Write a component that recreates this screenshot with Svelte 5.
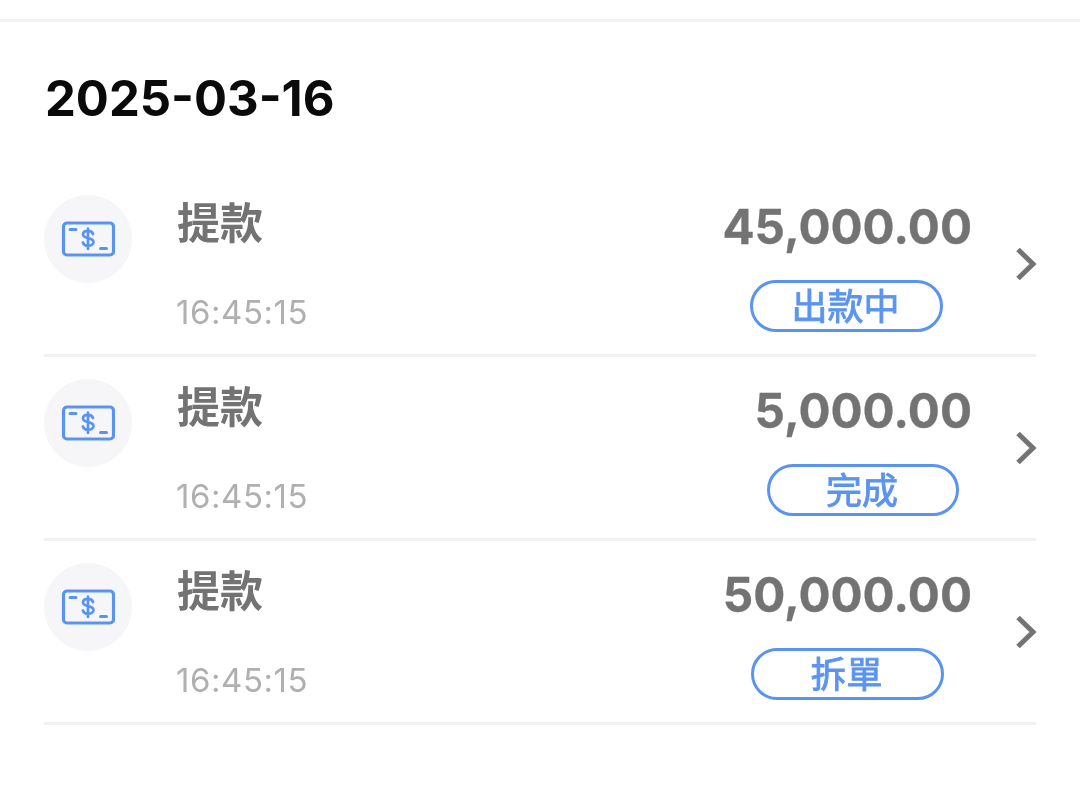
<script>
    const rows = [
        { amount: '45,000.00', status: '出款中', width: 193, right: 93 },
        { amount: '5,000.00', status: '完成', width: 192, right: 77 },
        { amount: '50,000.00', status: '拆單', width: 193, right: 92 }
    ];
</script>

<div class="page">
    <div class="top-line"></div>
    <h2>2025-03-16</h2>

    <div class="list">
        {#each rows as row}
            <div class="row">
                <div class="icon">
                    <svg width="54" height="36" viewBox="0 0 54 36" fill="none" stroke="#5b94f0" stroke-linecap="round" stroke-linejoin="round">
                        <rect x="2.5" y="2" width="50" height="32" rx="3.5" stroke-width="3.2" />
                        <path d="M9 8.5h6M39.5 27.500h6" stroke-width="3" />
                        <path d="M32 13c-.6-2-2.500-3.200-5-3.200-3 0-5 1.500-5 3.700 0 4.800 10.500 2.500 10.500 7.500 0 2.200-2.200 3.700-5.300 3.700-2.700 0-4.700-1.200-5.300-3.200M27 7.500v20.500" stroke-width="2.7" />
                    </svg>
                </div>
                <div class="info">
                    <div class="title">提款</div>
                    <div class="time">16:45:15</div>
                </div>
                <div class="values">
                    <div class="amount">{row.amount}</div>
                    <div class="badge" style="width: {row.width}px; margin-right: {row.right - 64}px">{row.status}</div>
                </div>
                <svg class="chevron" width="22" height="34" viewBox="0 0 22 34" fill="none">
                    <path d="M3 2.500l15 14.500L3 31.500" stroke="#737373" stroke-width="5" />
                </svg>
            </div>
        {/each}
    </div>
</div>

<style>
    :global(body) {
        background: #fff;
    }

    .page {
        height: 793px;
        padding-top: 19px;
        box-sizing: border-box;
        font-family: Inter, "Liberation Sans", "Noto Sans CJK TC", sans-serif;
        overflow: hidden;
        will-change: transform;
    }

    .top-line {
        height: 3px;
        background: #f2f2f4;
    }

    h2 {
        margin: 48px 0 0 45px;
        height: 103px;
        font-size: 49px;
        line-height: 58px;
        font-weight: 700;
        color: #0a0a0a;
    }

    .list {
        margin: 0 44px;
        width: 992px;
    }

    .row {
        display: flex;
        align-items: flex-start;
        height: 184px;
        box-sizing: border-box;
        padding-top: 22px;
        border-bottom: 3px solid #f1f1f4;
        position: relative;
    }

    .icon {
        width: 88px;
        height: 88px;
        border-radius: 50%;
        background: #f6f6f9;
        display: flex;
        align-items: center;
        justify-content: center;
        flex: none;
    }

    .info {
        margin-left: 45px;
        flex: 1;
    }

    .title {
        font-family: "Noto Sans CJK TC", sans-serif;
        font-size: 43px;
        line-height: 56px;
        font-weight: 700;
        color: #737373;
        margin-top: -3px;
    }

    .time {
        font-size: 33px;
        letter-spacing: 0.55px;
        line-height: 40px;
        color: #b0b0b0;
        margin-top: 44px;
        margin-left: -1px;
    }

    .values {
        display: flex;
        flex-direction: column;
        align-items: flex-end;
        margin-right: 64px;
    }

    .amount {
        font-size: 47.6px;
        line-height: 58px;
        font-weight: 700;
        -webkit-text-stroke: 0.3px #737373;
        color: #737373;
        margin-top: 3px;
    }

    .badge {
        margin-top: 24px;
        height: 52px;
        box-sizing: border-box;
        border: 3px solid #5b94f0;
        border-radius: 26px;
        padding-right: 2px;
        text-align: center;
        font-family: "Noto Sans CJK TC", sans-serif;
        font-size: 36px;
        line-height: 42px;
        -webkit-text-stroke: 0.9px #5b94f0;
        color: #5b94f0;
    }

    .chevron {
        position: absolute;
        right: -1px;
        top: 74px;
    }
</style>
